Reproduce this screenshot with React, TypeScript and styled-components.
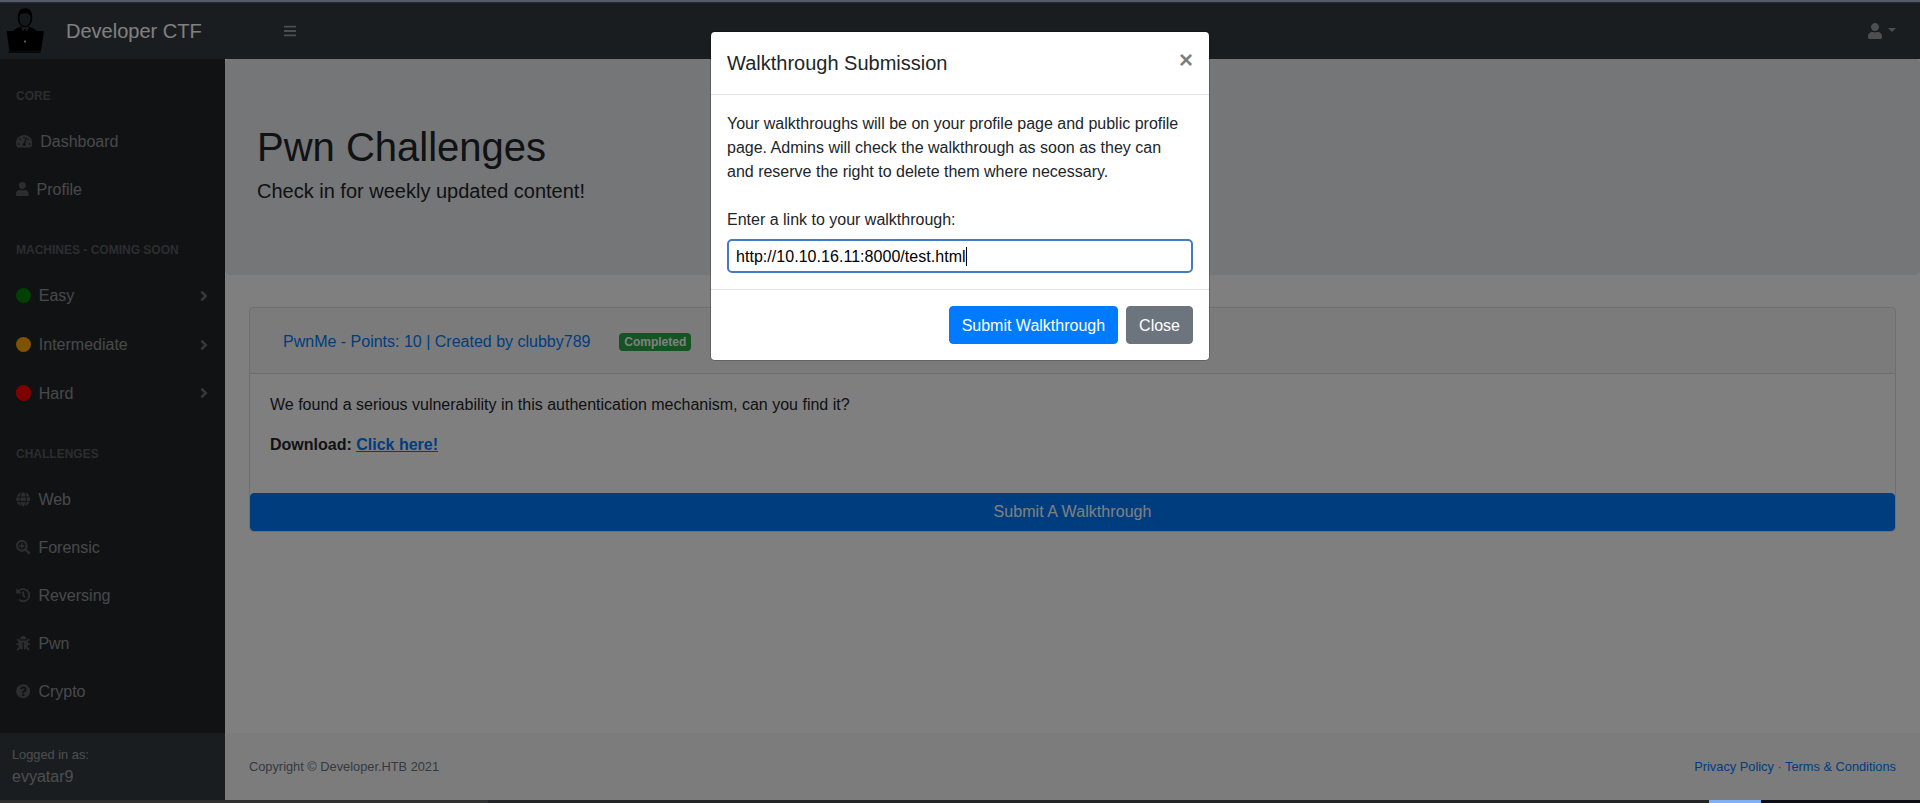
import React from "react";
import styled, { createGlobalStyle } from "styled-components";
import {
  FaAngleRight,
  FaBars,
  FaBug,
  FaGlobe,
  FaHistory,
  FaQuestionCircle,
  FaSearchPlus,
  FaTachometerAlt,
  FaUser,
} from "react-icons/fa";

const GlobalStyle = createGlobalStyle`
  *, *::before, *::after { box-sizing: border-box; }
  body {
    margin: 0;
    font-family: "Liberation Sans", Arial, sans-serif;
    font-size: 16px;
    line-height: 1.5;
    color: #212529;
    background: #fff;
    overflow: hidden;
  }
  h1, h2, h5, p { margin: 0; font-weight: 400; }
  a { color: #007bff; text-decoration: none; }
  button, input { font: inherit; }
`;

const Screen = styled.div`
  display: flex;
  flex-direction: column;
  height: 803px;
`;

const WindowEdge = styled.div`
  flex: none;
  height: 3px;
  background: #565b6a;
  border-bottom: 1px solid #262a31;
`;

const Taskbar = styled.div`
  flex: none;
  display: flex;
  height: 3px;
`;

const TaskbarPart = styled.div<{ $width?: number; $color: string }>`
  flex: ${(p) => (p.$width ? `0 0 ${p.$width}px` : "1")};
  background: ${(p) => p.$color};
`;

const Viewport = styled.div`
  position: relative;
  flex: 1;
  min-height: 0;
  display: flex;
  flex-direction: column;
`;

const TopNav = styled.header`
  flex: none;
  height: 56px;
  display: flex;
  align-items: center;
  background: #343a40;
  color: rgba(255, 255, 255, 0.5);
`;

const Logo = styled.svg`
  width: 50px;
  height: 50px;
`;

const Brand = styled.a`
  width: 209px;
  padding-left: 16px;
  font-size: 20px;
  line-height: 30px;
  color: #fff;
`;

const MenuToggle = styled.button`
  display: flex;
  padding: 4px 8px;
  margin-left: 16px;
  border: 1px solid transparent;
  background: none;
  color: inherit;
  svg { height: 14px; width: 12.25px; }
`;

const UserMenu = styled.div`
  display: flex;
  align-items: center;
  margin-left: auto;
  padding-right: 24px;
  svg { height: 16px; width: 14px; }
`;

const Caret = styled.span`
  margin: 0 0 2px 6.4px;
  border-top: 4.8px solid;
  border-left: 4.8px solid transparent;
  border-right: 4.8px solid transparent;
`;

const Columns = styled.div`
  flex: 1;
  display: flex;
  min-height: 0;
`;

const Sidebar = styled.nav`
  flex: 0 0 225px;
  display: flex;
  flex-direction: column;
  background: #212529;
  color: rgba(255, 255, 255, 0.5);
`;

const SideMenu = styled.div`
  flex: 1;
  min-height: 0;
`;

const SideHeading = styled.div`
  padding: 28px 16px 12px;
  font-size: 12px;
  line-height: 18px;
  font-weight: 700;
  text-transform: uppercase;
  color: rgba(255, 255, 255, 0.25);
`;

const SideLink = styled.a<{ $tall?: boolean }>`
  display: flex;
  align-items: center;
  height: ${(p) => (p.$tall ? 48.8 : 48)}px;
  padding: 2px 16px 0;
  color: rgba(255, 255, 255, 0.5);
`;

const SideIcon = styled.span<{ $width: number }>`
  display: flex;
  margin: 0 8px 2px 0;
  color: rgba(255, 255, 255, 0.25);
  svg {
    height: 14.4px;
    width: ${(p) => p.$width}px;
  }
`;

const LevelDot = styled.span<{ $color: string }>`
  width: 15.4px;
  height: 15.4px;
  margin: 0 7.4px 2px 0;
  border-radius: 50%;
  background: ${(p) => p.$color};
`;

const Chevron = styled(FaAngleRight)`
  height: 16px;
  width: 8px;
  margin: 0 1px 1px auto;
  opacity: 0.7;
`;

const SideFooter = styled.div`
  flex: none;
  padding: 12px;
  background: #343a40;
`;

const UserName = styled.div`
  height: 24px;
  padding-top: 1px;
`;

const Small = styled.div`
  font-size: 12.8px;
  line-height: 19.2px;
`;

const Content = styled.div`
  flex: 1;
  display: flex;
  flex-direction: column;
  min-width: 0;
`;

const Jumbotron = styled.section`
  padding: 64px 32px;
  margin-bottom: 32px;
  border-radius: 4.8px;
  background: #e9ecef;
`;

const PageTitle = styled.h1`
  margin-bottom: 8px;
  font-size: 40px;
  line-height: 48px;
`;

const PageLead = styled.h5`
  margin-bottom: 8px;
  font-size: 20px;
  line-height: 24px;
`;

const Card = styled.section`
  margin: 0 24px;
  border: 1px solid rgba(0, 0, 0, 0.125);
  border-radius: 4px;
`;

const CardHeader = styled.div`
  display: flex;
  align-items: center;
  height: 66px;
  padding: 2px 32px 0 33px;
  border-bottom: 1px solid rgba(0, 0, 0, 0.125);
  background: rgba(0, 0, 0, 0.03);
`;

const Badge = styled.span`
  margin-left: 29px;
  padding: 3px 4.8px;
  border-radius: 4px;
  font-size: 12px;
  line-height: 12px;
  font-weight: 700;
  color: #fff;
  background: #28a745;
`;

const CardBody = styled.div`
  height: 119px;
  padding: 19px 20px 0;
  p { margin-bottom: 16px; }
  b a { text-decoration: underline; }
`;

const Button = styled.button<{ $color: string; $block?: boolean }>`
  display: block;
  width: ${(p) => (p.$block ? "100%" : "auto")};
  height: 38px;
  padding: ${(p) => (p.$block ? "6px 12px" : "7px 12px 5px")};
  border: 1px solid ${(p) => p.$color};
  border-radius: 4px;
  line-height: 24px;
  letter-spacing: ${(p) => (p.$block ? "0.06px" : "normal")};
  color: #fff;
  background: ${(p) => p.$color};
`;

const PageFooter = styled.footer`
  display: flex;
  justify-content: space-between;
  margin-top: auto;
  padding: 24px;
  background: #f8f9fa;
  color: #6c757d;
`;

const Backdrop = styled.div`
  position: absolute;
  inset: 0;
  display: flex;
  justify-content: center;
  align-items: flex-start;
  padding-top: 28px;
  background: rgba(0, 0, 0, 0.5);
`;

const Dialog = styled.div`
  width: 500px;
  border: 1px solid rgba(0, 0, 0, 0.2);
  border-radius: 4.8px;
  background: #fff;
  background-clip: padding-box;
`;

const DialogHeader = styled.div`
  display: flex;
  justify-content: space-between;
  align-items: flex-start;
  height: 63px;
  padding: 16px;
  border-bottom: 1px solid #dee2e6;
`;

const DialogTitle = styled.h5`
  font-size: 20px;
  line-height: 30px;
`;

const CloseIcon = styled.button`
  padding: 0;
  border: 0;
  background: none;
  font-size: 24px;
  line-height: 24px;
  font-weight: 700;
  color: #000;
  opacity: 0.5;
`;

const DialogBody = styled.div`
  height: 194px;
  padding: 17px 16px 15px;
  p { padding-right: 10px; }
`;

const FieldLabel = styled.label`
  display: block;
  margin: 24px 0 7px;
`;

const UrlField = styled.div`
  display: flex;
  align-items: center;
  height: 34px;
  padding: 1px 7px 0;
  border: 2px solid #457bc6;
  border-radius: 5px;
  letter-spacing: 0.04px;
  color: #000;
`;

const TextCursor = styled.span`
  width: 1px;
  height: 19px;
  background: #000;
`;

const DialogFooter = styled.div`
  display: flex;
  justify-content: flex-end;
  gap: 8px;
  padding: 16px;
  border-top: 1px solid #dee2e6;
`;

const levels = [
  { name: "Easy", color: "#008000" },
  { name: "Intermediate", color: "#ffa500" },
  { name: "Hard", color: "#ff0000" },
];

const challenges = [
  { name: "Web", Icon: FaGlobe },
  { name: "Forensic", Icon: FaSearchPlus },
  { name: "Reversing", Icon: FaHistory },
  { name: "Pwn", Icon: FaBug },
  { name: "Crypto", Icon: FaQuestionCircle },
];

function HackerLogo() {
  return (
    <Logo viewBox="0 0 50 50">
      <path d="M12 29c0-4 3-6 8-8l3-1h4l3 1c5 2 8 4 8 8z" fill="#000" />
      <path d="M21.500 20h7v2.500L25 29l-3.500-6.500z" fill="#30363b" />
      <path d="M24.200 23h1.600l1 6h-3.600z" fill="#000" />
      <path d="M17.800 13C17.300 5.500 20 2.300 25 2.300s7.700 3.200 7.200 10.700c-.4 4.500-3 8.200-7.200 8.200S18.200 17.500 17.800 13z" fill="#000" />
      <path d="M19.500 12c0-3.500 1.500-4 3.500-4.500 2.500-.6 7.500-.5 7.500 4.500s-2 8-5.500 8-5.500-3-5.500-8z" fill="#2b3035" />
      <path d="M7.500 25h35.500q1 0 .8 1L41 44.500h-.5v2.300H8.500v-1.300h1L6.700 26q-.2-1 .8-1z" fill="#000" />
      <path d="M9.500 45.300h30" stroke="#30363b" strokeWidth="0.5" />
      <circle cx="25" cy="35.500" r="1" fill="#ddd" />
    </Logo>
  );
}

export default function App() {
  return (
    <Screen>
      <GlobalStyle />
      <WindowEdge />
      <Viewport>
        <TopNav>
          <HackerLogo />
          <Brand>Developer CTF</Brand>
          <MenuToggle aria-label="Toggle menu"><FaBars /></MenuToggle>
          <UserMenu><FaUser /><Caret /></UserMenu>
        </TopNav>
        <Columns>
          <Sidebar>
            <SideMenu>
              <SideHeading>Core</SideHeading>
              <SideLink><SideIcon $width={16.2}><FaTachometerAlt /></SideIcon>Dashboard</SideLink>
              <SideLink><SideIcon $width={12.6}><FaUser /></SideIcon>Profile</SideLink>
              <SideHeading>Machines - Coming Soon</SideHeading>
              {levels.map((level) => (
                <SideLink key={level.name} $tall>
                  <LevelDot $color={level.color} />
                  {level.name}
                  <Chevron />
                </SideLink>
              ))}
              <SideHeading>Challenges</SideHeading>
              {challenges.map(({ name, Icon }) => (
                <SideLink key={name}><SideIcon $width={14.4}><Icon /></SideIcon>{name}</SideLink>
              ))}
            </SideMenu>
            <SideFooter>
              <Small>Logged in as:</Small>
              <UserName>evyatar9</UserName>
            </SideFooter>
          </Sidebar>
          <Content>
            <Jumbotron>
              <PageTitle>Pwn Challenges</PageTitle>
              <PageLead>Check in for weekly updated content!</PageLead>
            </Jumbotron>
            <Card>
              <CardHeader>
                <a>PwnMe - Points: 10 | Created by clubby789</a>
                <Badge>Completed</Badge>
              </CardHeader>
              <CardBody>
                <p>We found a serious vulnerability in this authentication mechanism, can you find it?</p>
                <p><b>Download: <a>Click here!</a></b></p>
              </CardBody>
              <Button $color="#007bff" $block>Submit A Walkthrough</Button>
            </Card>
            <PageFooter>
              <Small>Copyright © Developer.HTB 2021</Small>
              <Small><a>Privacy Policy</a> · <a>Terms &amp; Conditions</a></Small>
            </PageFooter>
          </Content>
        </Columns>
        <Backdrop>
          <Dialog role="dialog">
            <DialogHeader>
              <DialogTitle>Walkthrough Submission</DialogTitle>
              <CloseIcon aria-label="Close">×</CloseIcon>
            </DialogHeader>
            <DialogBody>
              <p>
                Your walkthroughs will be on your profile page and public profile page. Admins will
                check the walkthrough as soon as they can and reserve the right to delete them where
                necessary.
              </p>
              <FieldLabel>Enter a link to your walkthrough:</FieldLabel>
              <UrlField>http://10.10.16.11:8000/test.html<TextCursor /></UrlField>
            </DialogBody>
            <DialogFooter>
              <Button $color="#007bff">Submit Walkthrough</Button>
              <Button $color="#6c757d">Close</Button>
            </DialogFooter>
          </Dialog>
        </Backdrop>
      </Viewport>
      <Taskbar>
        <TaskbarPart $width={488} $color="#303030" />
        <TaskbarPart $color="#222425" />
        <TaskbarPart $width={52} $color="#7fb0f5" />
        <TaskbarPart $width={159} $color="#0b0e14" />
      </Taskbar>
    </Screen>
  );
}
